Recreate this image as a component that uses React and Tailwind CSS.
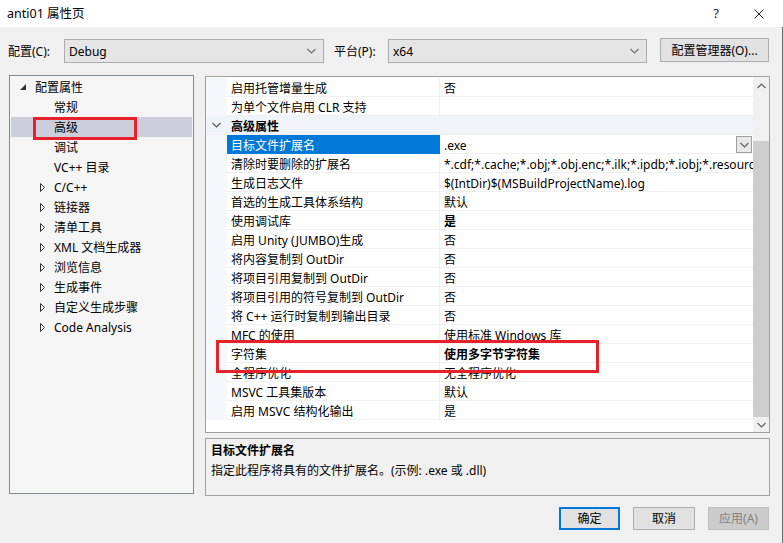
import React from "react";

const FONT = "font-['Noto_Sans','Noto_Sans_CJK_SC',sans-serif]";

const tree = [
  { label: "配置属性", level: 0, open: true },
  { label: "常规", level: 1 },
  { label: "高级", level: 1, selected: true },
  { label: "调试", level: 1 },
  { label: "VC++ 目录", level: 1 },
  { label: "C/C++", level: 1, arrow: true },
  { label: "链接器", level: 1, arrow: true },
  { label: "清单工具", level: 1, arrow: true },
  { label: "XML 文档生成器", level: 1, arrow: true },
  { label: "浏览信息", level: 1, arrow: true },
  { label: "生成事件", level: 1, arrow: true },
  { label: "自定义生成步骤", level: 1, arrow: true },
  { label: "Code Analysis", level: 1, arrow: true },
];

const rows = [
  { name: "启用托管增量生成", value: "否" },
  { name: "为单个文件启用 CLR 支持", value: "" },
  { section: "高级属性" },
  { name: "目标文件扩展名", value: ".exe", selected: true },
  { name: "清除时要删除的扩展名", value: "*.cdf;*.cache;*.obj;*.obj.enc;*.ilk;*.ipdb;*.iobj;*.resources;*.tlb;*.tli;*.tlh" },
  { name: "生成日志文件", value: "$(IntDir)$(MSBuildProjectName).log" },
  { name: "首选的生成工具体系结构", value: "默认" },
  { name: "使用调试库", value: "是", bold: true },
  { name: "启用 Unity (JUMBO)生成", value: "否" },
  { name: "将内容复制到 OutDir", value: "否" },
  { name: "将项目引用复制到 OutDir", value: "否" },
  { name: "将项目引用的符号复制到 OutDir", value: "否" },
  { name: "将 C++ 运行时复制到输出目录", value: "否" },
  { name: "MFC 的使用", value: "使用标准 Windows 库" },
  { name: "字符集", value: "使用多字节字符集", bold: true },
  { name: "全程序优化", value: "无全程序优化" },
  { name: "MSVC 工具集版本", value: "默认" },
  { name: "启用 MSVC 结构化输出", value: "是" },
];

function Chevron({ up, className = "" }) {
  return (
    <svg width="9" height="6" viewBox="0 0 9 6" className={className}>
      <path
        d={up ? "M0.5 5 L4.5 1 L8.5 5" : "M0.5 1 L4.5 5 L8.5 1"}
        fill="none"
        stroke="currentColor"
        strokeWidth="1.2"
      />
    </svg>
  );
}

function Combo({ value, width }) {
  return (
    <div
      className={`${width} h-[24px] bg-[#e5e5e5] border border-[#acacac] flex items-center justify-between pl-[4px] pr-[7px]`}
    >
      <span className="pt-[1px]">{value}</span>
      <Chevron className="text-[#707070]" />
    </div>
  );
}

function TreeRow({ item }) {
  return (
    <div
      className={`h-[20px] mx-[1px] flex items-center ${item.selected ? "bg-[#cccedb]" : ""}`}
    >
      {item.level === 0 ? (
        <div className="flex items-center pl-[9px]">
          <svg width="6" height="6" viewBox="0 0 6 6">
            <path d="M6 0 L6 6 L0 6 Z" fill="#333" />
          </svg>
          <span className="ml-[9px] pt-[1px]">{item.label}</span>
        </div>
      ) : (
        <div className="flex items-center pl-[29px]">
          <div className="w-[5px] h-[9px] flex items-center">
            {item.arrow && (
              <svg width="5" height="9" viewBox="0 0 5 9">
                <path d="M0.5 0.5 L4.5 4.5 L0.5 8.5 Z" fill="none" stroke="#333" strokeWidth="1" />
              </svg>
            )}
          </div>
          <span className="ml-[9px] pt-[1px]">{item.label}</span>
        </div>
      )}
    </div>
  );
}

function GridRow({ row }) {
  if (row.section) {
    return (
      <div className="h-[19px] flex bg-[#f0f4f9] border-b border-[#f0f0f0]">
        <div className="w-[21px] flex items-center justify-center">
          <Chevron className="text-[#555]" />
        </div>
        <div className="pl-[4px] pt-[2px] flex items-center font-bold">{row.section}</div>
      </div>
    );
  }
  return (
    <div className="h-[19px] flex min-w-0">
      <div className="w-[21px] shrink-0 bg-[#f5f7fa]" />
      <div
        className={`w-[213px] shrink-0 flex items-center pl-[4px] pt-[2px] border-b border-r whitespace-nowrap overflow-hidden ${
          row.selected
            ? "bg-[#0078d7] text-white border-[#0078d7]"
            : "bg-white border-[#f0f0f0]"
        }`}
      >
        {row.name}
      </div>
      <div className="flex-1 min-w-0 flex items-center pl-[4px] pt-[2px] bg-white border-b border-[#f0f0f0] whitespace-nowrap overflow-hidden relative">
        <span className={row.bold ? "font-bold" : ""}>{row.value}</span>
        {row.selected && (
          <div className="absolute right-[1px] top-[1px] w-[16px] h-[17px] bg-[#e8e8e8] border border-[#a0a0a0] flex items-center justify-center text-[#606060]">
            <Chevron />
          </div>
        )}
      </div>
    </div>
  );
}

function Button({ children, primary, disabled, width }) {
  return (
    <div
      className={`${width} h-[23px] flex items-center justify-center ${
        primary
          ? "border-2 border-[#0078d7] bg-[#e1e1e1]"
          : disabled
          ? "border border-[#bfbfbf] bg-[#cccccc] text-[#838383]"
          : "border border-[#adadad] bg-[#e1e1e1]"
      }`}
    >
      {children}
    </div>
  );
}

export default function App() {
  return (
    <div className={`${FONT} text-[12px] leading-[15px] text-black w-[783px] h-[543px] flex flex-col relative overflow-hidden`}>
      {/* title bar */}
      <div className="h-[27px] bg-white flex items-center justify-between pl-[7px] pr-[19px] text-[12.5px]">
        <span>anti01 属性页</span>
        <div className="flex items-center gap-[35px] text-[#222]">
          <span className="text-[13px]">?</span>
          <svg width="10" height="10" viewBox="0 0 10 10">
            <path d="M0.5 0.5 L9.5 9.5 M9.5 0.5 L0.5 9.5" stroke="#222" strokeWidth="1" />
          </svg>
        </div>
      </div>

      {/* body */}
      <div className="flex-1 bg-[#f0f0f0] border-r border-[#6d6d6d] flex flex-col">
        {/* config row */}
        <div className="flex items-center pl-[8px] pt-[12px] h-[36px]">
          <div className="w-[56px] pt-[1px]">配置(C):</div>
          <Combo value="Debug" width="w-[260px]" />
          <div className="w-[54px] ml-[10px] pt-[1px]">平台(P):</div>
          <Combo value="x64" width="w-[259px]" />
          <div className="ml-[13px] w-[109px] h-[24px] pt-[1px] bg-[#e1e1e1] border border-[#adadad] flex items-center justify-center -mt-[2px] whitespace-nowrap">
            配置管理器(O)...
          </div>
        </div>

        {/* main */}
        <div className="flex pl-[9px] pt-[12px]">
          <div className="w-[185px] h-[419px] bg-[#f5f5f5] border border-[#828790] pt-[1px]">
            {tree.map((t) => (
              <TreeRow key={t.label} item={t} />
            ))}
          </div>

          <div className="ml-[11px] w-[565px] flex flex-col">
            <div className="mt-[1px] h-[357px] border border-[#a0a0a0] bg-white flex">
              <div className="flex-1 min-w-0 pt-[1px] flex flex-col">
                {rows.map((r, i) => (
                  <GridRow key={i} row={r} />
                ))}
              </div>
              <div className="w-[16px] shrink-0 bg-[#f0f0f0] flex flex-col">
                <div className="h-[17px] flex items-center justify-center text-[#606060]">
                  <Chevron up />
                </div>
                <div className="h-[47px]" />
                <div className="h-[276px] bg-[#cdcdcd]" />
                <div className="flex-1 flex items-center justify-center text-[#606060]">
                  <Chevron />
                </div>
              </div>
            </div>

            <div className="mt-[5px] h-[58px] border border-[#a0a0a0] bg-[#f0f0f0] pl-[5px] pt-[3px]">
              <div className="font-bold leading-[17px]">目标文件扩展名</div>
              <div className="mt-[4px]">指定此程序将具有的文件扩展名。(示例: .exe 或 .dll)</div>
            </div>
          </div>
        </div>

        {/* buttons */}
        <div className="flex justify-end pr-[13px] pt-[11px] gap-[13px]">
          <Button primary width="w-[61px]">确定</Button>
          <Button width="w-[62px]">取消</Button>
          <Button disabled width="w-[61px]">应用(A)</Button>
        </div>
      </div>

      {/* annotation boxes */}
      <div className="absolute left-[33px] top-[117px] w-[104px] h-[23px] border-[3px] border-[#e8202a]" />
      <div className="absolute left-[216px] top-[340px] w-[383px] h-[33px] border-[3px] border-[#e8202a]" />
    </div>
  );
}
